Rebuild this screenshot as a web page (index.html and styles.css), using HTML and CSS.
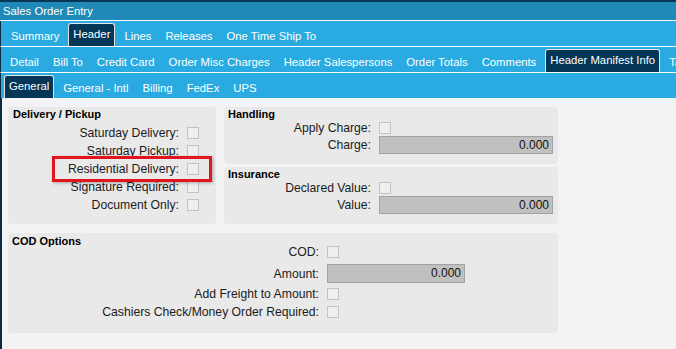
FILE: index.html
```html
<!DOCTYPE html>
<html lang="en">
<head>
    <meta charset="UTF-8">
    <meta name="viewport" content="width=device-width, initial-scale=1.0">
    <title>Sales Order Entry</title>
    <link rel="stylesheet" href="styles.css">
</head>
<body>
    <div class="window">
        <div class="top-strip"></div>
        <div class="title-bar">Sales Order Entry</div>

        <div class="tab-row row-main">
            <div class="tab">Summary</div>
            <div class="tab active">Header</div>
            <div class="tab">Lines</div>
            <div class="tab">Releases</div>
            <div class="tab">One Time Ship To</div>
        </div>

        <div class="tab-row row-header">
            <div class="tab">Detail</div>
            <div class="tab">Bill To</div>
            <div class="tab">Credit Card</div>
            <div class="tab">Order Misc Charges</div>
            <div class="tab">Header Salespersons</div>
            <div class="tab">Order Totals</div>
            <div class="tab">Comments</div>
            <div class="tab active">Header Manifest Info</div>
            <div class="tab">Taxes</div>
        </div>

        <div class="tab-row row-manifest">
            <div class="tab active">General</div>
            <div class="tab">General - Intl</div>
            <div class="tab">Billing</div>
            <div class="tab">FedEx</div>
            <div class="tab">UPS</div>
        </div>

        <div class="content">
            <div class="top-grid">
                <!-- Delivery / Pickup -->
                <div class="panel delivery">
                    <div class="panel-title">Delivery / Pickup</div>
                    <div class="fields">
                        <div class="field"><span class="label">Saturday Delivery:</span><span class="check"></span></div>
                        <div class="field"><span class="label">Saturday Pickup:</span><span class="check"></span></div>
                        <div class="field"><span class="label">Residential Delivery:</span><span class="check"></span></div>
                        <div class="field"><span class="label">Signature Required:</span><span class="check"></span></div>
                        <div class="field"><span class="label">Document Only:</span><span class="check"></span></div>
                    </div>
                    <div class="highlight"></div>
                </div>

                <div class="right-col">
                    <div class="panel charge-panel">
                        <div class="panel-title">Handling</div>
                        <div class="field check-row"><span class="label">Apply Charge:</span><span class="check"></span></div>
                        <div class="field input-row"><span class="label">Charge:</span><span class="amount wide">0.000</span></div>
                    </div>
                    <div class="panel charge-panel">
                        <div class="panel-title">Insurance</div>
                        <div class="field check-row"><span class="label">Declared Value:</span><span class="check"></span></div>
                        <div class="field input-row"><span class="label">Value:</span><span class="amount wide">0.000</span></div>
                    </div>
                </div>
            </div>

            <!-- COD Options -->
            <div class="panel cod">
                <div class="panel-title">COD Options</div>
                <div class="field cod-first"><span class="label">COD:</span><span class="check"></span></div>
                <div class="field cod-amount"><span class="label">Amount:</span><span class="amount">0.000</span></div>
                <div class="field cod-freight"><span class="label">Add Freight to Amount:</span><span class="check"></span></div>
                <div class="field cod-cashier"><span class="label">Cashiers Check/Money Order Required:</span><span class="check"></span></div>
            </div>
        </div>
    </div>
</body>
</html>
```

FILE: styles.css
```css
body {
    margin: 0;
    padding: 0;
    font-family: 'Liberation Sans', Arial, sans-serif;
    background: #f3f3f5;
}

.window {
    width: 676px;
    height: 349px;
    overflow: hidden;
    background: #f3f3f5;
}

.top-strip {
    height: 2px;
    background: #083756;
}

.title-bar {
    height: 18px;
    line-height: 18px;
    padding-left: 3px;
    background: #2189b7;
    color: #ffffff;
    font-size: 11.3px;
    border-bottom: 1px solid #ffffff;
}

/* tab rows */
.tab-row {
    display: flex;
    align-items: flex-start;
    height: 25px;
    background: #29abe2;
    border-left: 1px solid #0b2a44;
    white-space: nowrap;
    overflow: hidden;
}

.row-main {
    padding-left: 3px;
    border-bottom: 1px solid #ffffff;
}

.row-header {
    padding-left: 2px;
    border-bottom: 1px solid #ffffff;
}

.row-manifest {
    padding-left: 1px;
}

.tab {
    box-sizing: border-box;
    flex-shrink: 0;
    height: 23px;
    margin: 2px 2px 0 2px;
    padding: 2px 4px 0 4px;
    border: 1px solid transparent;
    border-bottom: 0;
    line-height: 21px;
    font-size: 11.3px;
    color: #ffffff;
}

.tab.active {
    padding-top: 0;
    background: #043657;
    border-color: #e4e4e4;
    border-radius: 3px 3px 0 0;
}

/* content */
.content {
    height: 251px;
    padding: 9px 0 0 6px;
    border-left: 2px solid #0b2a44;
    box-sizing: border-box;
}

.top-grid {
    display: grid;
    grid-template-columns: 208px 334px;
    column-gap: 8px;
    width: 550px;
}

.right-col {
    display: flex;
    flex-direction: column;
    gap: 3px;
}

.panel {
    position: relative;
    box-sizing: border-box;
    background: #e9e9e9;
    border-radius: 4px;
    padding: 1px 4px 0 4px;
}

.panel-title {
    height: 13px;
    line-height: 13px;
    font-size: 11px;
    font-weight: bold;
    color: #000000;
}

.field {
    display: flex;
    align-items: center;
    gap: 8px;
}

.label {
    text-align: right;
    font-size: 12.2px;
    line-height: 14px;
    color: #1b1b22;
    white-space: nowrap;
}

.check {
    box-sizing: border-box;
    width: 12px;
    height: 12px;
    border: 1px solid #c3c3c3;
    background: #efefef;
}

.amount {
    box-sizing: border-box;
    height: 18px;
    line-height: 16px;
    padding-right: 3px;
    text-align: right;
    font-size: 12px;
    color: #111111;
    background: #c0c0c0;
    border: 1px solid #a2a2a2;
}

/* delivery panel */
.delivery {
    padding-left: 5px;
}

.delivery .fields {
    margin-top: 3px;
}

.delivery .field {
    height: 18px;
}

.delivery .label {
    width: 166px;
}

.highlight {
    position: absolute;
    left: 44px;
    top: 49px;
    width: 160px;
    height: 26px;
    box-sizing: border-box;
    border: 3px solid #e3141b;
    box-shadow: 1px 1px 3px rgba(0, 0, 0, 0.3);
}

/* handling / insurance */
.charge-panel {
    height: 57px;
}

.charge-panel .label {
    width: 143px;
}

.check-row {
    height: 12px;
    margin-top: 1px;
}

.input-row {
    height: 18px;
    margin-top: 2px;
}

.amount.wide {
    width: 174px;
}

/* COD options */
.cod {
    width: 550px;
    height: 100px;
    margin-top: 9px;
    padding-top: 2px;
}

.cod .label {
    width: 307px;
}

.cod .amount {
    width: 138px;
    height: 19px;
    line-height: 17px;
}

.cod-first {
    height: 12px;
    margin-top: -2px;
}

.cod-amount {
    height: 19px;
    margin-top: 6px;
}

.cod-freight {
    height: 12px;
    margin-top: 5px;
}

.cod-cashier {
    height: 12px;
    margin-top: 6px;
}
```
